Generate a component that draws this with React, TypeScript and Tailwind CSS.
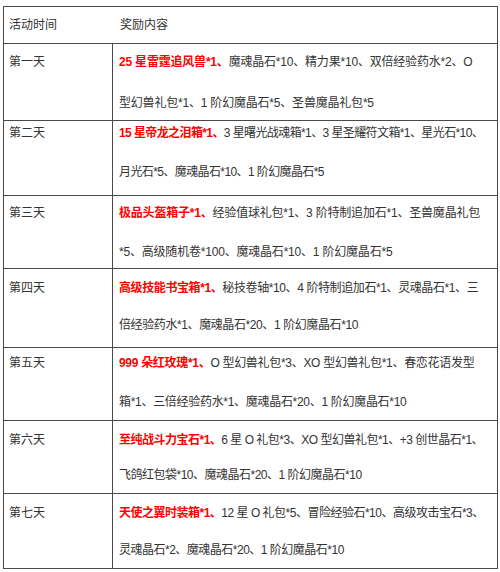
const red = 'font-bold text-[#ff0000]';

type Row = {
  day: string;
  hot: string;
  line1: string;
  line2: string;
  box: string;
  gap: string;
  track: string;
};

const rows: Row[] = [
  {
    day: '第一天',
    hot: '25 星雷霆追风兽*1、',
    line1: '魔魂晶石*10、精力果*10、双倍经验药水*2、O',
    line2: '型幻兽礼包*1、1 阶幻魔晶石*5、圣兽魔晶礼包*5',
    box: 'h-[76px] pt-[8px]',
    gap: 'mt-[21px]',
    track: 'tracking-[-0.2px]',
  },
  {
    day: '第二天',
    hot: '15 星帝龙之泪箱*1、',
    line1: '3 星曙光战魂箱*1、3 星圣耀符文箱*1、星光石*10、',
    line2: '月光石*5、魔魂晶石*10、1 阶幻魔晶石*5',
    box: 'h-[74px] pt-[2px]',
    gap: 'mt-[19px]',
    track: 'tracking-[-0.6px]',
  },
  {
    day: '第三天',
    hot: '极品头盔箱子*1、',
    line1: '经验值球礼包*1、3 阶特制追加石*1、圣兽魔晶礼包',
    line2: '*5、高级随机卷*100、魔魂晶石*10、1 阶幻魔晶石*5',
    box: 'h-[72px] pt-[7px]',
    gap: 'mt-[19px]',
    track: 'tracking-[-0.2px]',
  },
  {
    day: '第四天',
    hot: '高级技能书宝箱*1、',
    line1: '秘技卷轴*10、4 阶特制追加石*1、灵魂晶石*1、三',
    line2: '倍经验药水*1、魔魂晶石*20、1 阶幻魔晶石*10',
    box: 'h-[78px] pt-[9px]',
    gap: 'mt-[17px]',
    track: 'tracking-[-0.4px]',
  },
  {
    day: '第五天',
    hot: '999 朵红玫瑰*1、',
    line1: 'O 型幻兽礼包*3、XO 型幻兽礼包*1、春恋花语发型',
    line2: '箱*1、三倍经验药水*1、魔魂晶石*20、1 阶幻魔晶石*10',
    box: 'h-[72px] pt-[5px]',
    gap: 'mt-[19px]',
    track: 'tracking-[-0.3px]',
  },
  {
    day: '第六天',
    hot: '至纯战斗力宝石*1、',
    line1: '6 星 O 礼包*3、XO 型幻兽礼包*1、+3 创世晶石*1、',
    line2: '飞鸽红包袋*10、魔魂晶石*20、1 阶幻魔晶石*10',
    box: 'h-[72px] pt-[9px]',
    gap: 'mt-[15px]',
    track: 'tracking-[-0.5px]',
  },
  {
    day: '第七天',
    hot: '天使之翼时装箱*1、',
    line1: '12 星 O 礼包*5、冒险经验石*10、高级攻击宝石*3、',
    line2: '灵魂晶石*2、魔魂晶石*20、1 阶幻魔晶石*10',
    box: 'h-[74px] pt-[9px]',
    gap: 'mt-[17px]',
    track: 'tracking-[-0.5px]',
  },
];

export default function App() {
  return (
    <div
      className="h-[572px] w-[500px] bg-white pt-[6px] pl-[3px] text-[12px] text-[#333]"
      style={{ fontFamily: '"Liberation Sans", "Noto Sans CJK SC", sans-serif' }}
    >
      <div className="w-[495px] border border-[#4a4a4a]">
        <div className="flex h-[36px] pt-[8px]">
          <div className="w-[109px] shrink-0 pl-[5px] leading-[20px]">活动时间</div>
          <div className="pl-[7px] leading-[20px]">奖励内容</div>
        </div>
        {rows.map((row) => (
          <div key={row.day} className="flex border-t border-[#4a4a4a]">
            <div className={`w-[109px] shrink-0 border-r border-[#4a4a4a] pl-[5px] leading-[20px] ${row.box}`}>
              {row.day}
            </div>
            <div className={`pl-[6px] leading-[20px] whitespace-nowrap ${row.box} ${row.track}`}>
              <div>
                <span className={red}>{row.hot}</span>
                {row.line1}
              </div>
              <div className={row.gap}>{row.line2}</div>
            </div>
          </div>
        ))}
      </div>
    </div>
  );
}
